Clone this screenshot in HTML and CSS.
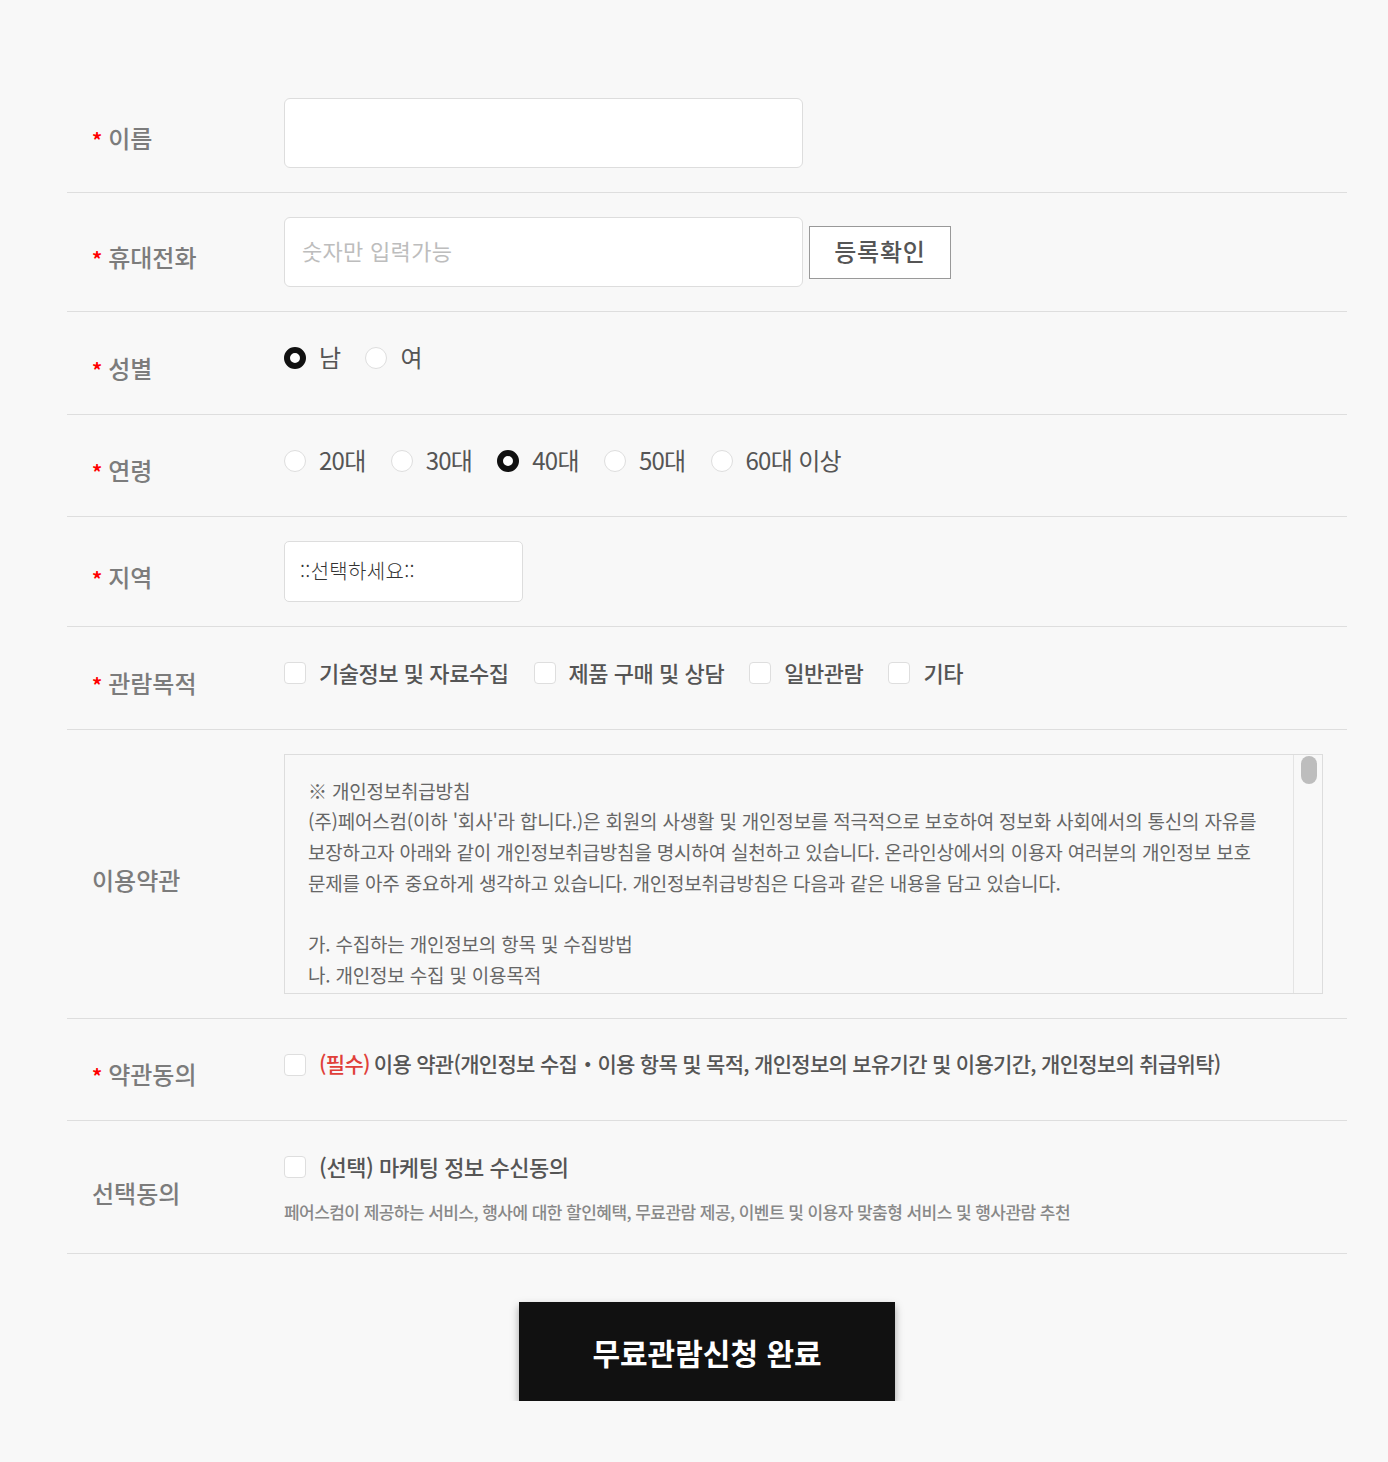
FILE: index.html
```html
<!DOCTYPE html>
<html lang="ko">
<head>
<meta charset="utf-8">
<title>무료관람신청</title>
<link rel="stylesheet" href="styles.css">
</head>
<body>
<form class="apply">
  <div class="row">
    <div class="label"><span class="req">*</span>이름</div>
    <div class="field"><input class="text" type="text"></div>
  </div>

  <div class="row">
    <div class="label"><span class="req">*</span>휴대전화</div>
    <div class="field field-inline">
      <input class="text" type="text" placeholder="숫자만 입력가능">
      <button type="button" class="check-btn">등록확인</button>
    </div>
  </div>

  <div class="row">
    <div class="label"><span class="req">*</span>성별</div>
    <div class="field">
      <div class="opts">
        <label class="opt"><input type="radio" name="gender" checked><span>남</span></label>
        <label class="opt"><input type="radio" name="gender"><span>여</span></label>
      </div>
    </div>
  </div>

  <div class="row">
    <div class="label"><span class="req">*</span>연령</div>
    <div class="field">
      <div class="opts">
        <label class="opt"><input type="radio" name="age"><span>20대</span></label>
        <label class="opt"><input type="radio" name="age"><span>30대</span></label>
        <label class="opt"><input type="radio" name="age" checked><span>40대</span></label>
        <label class="opt"><input type="radio" name="age"><span>50대</span></label>
        <label class="opt"><input type="radio" name="age"><span>60대 이상</span></label>
      </div>
    </div>
  </div>

  <div class="row">
    <div class="label"><span class="req">*</span>지역</div>
    <div class="field">
      <select class="select">
        <option>::선택하세요::</option>
        <option>서울</option>
        <option>경기</option>
        <option>인천</option>
        <option>부산</option>
      </select>
    </div>
  </div>

  <div class="row">
    <div class="label"><span class="req">*</span>관람목적</div>
    <div class="field">
      <div class="opts opts-bold">
        <label class="opt"><input type="checkbox"><span>기술정보 및 자료수집</span></label>
        <label class="opt"><input type="checkbox"><span>제품 구매 및 상담</span></label>
        <label class="opt"><input type="checkbox"><span>일반관람</span></label>
        <label class="opt"><input type="checkbox"><span>기타</span></label>
      </div>
    </div>
  </div>

  <div class="row">
    <div class="label">이용약관</div>
    <div class="field">
      <div class="terms">
        <div class="terms-body">
          <p>※ 개인정보취급방침</p>
          <p>(주)페어스컴(이하 '회사'라 합니다.)은 회원의 사생활 및 개인정보를 적극적으로 보호하여 정보화 사회에서의 통신의 자유를 보장하고자 아래와 같이 개인정보취급방침을 명시하여 실천하고 있습니다. 온라인상에서의 이용자 여러분의 개인정보 보호 문제를 아주 중요하게 생각하고 있습니다. 개인정보취급방침은 다음과 같은 내용을 담고 있습니다.</p>
          <p>&nbsp;</p>
          <p>가. 수집하는 개인정보의 항목 및 수집방법</p>
          <p>나. 개인정보 수집 및 이용목적</p>
          <p>다. 개인정보의 보유 및 이용기간</p>
          <p>라. 개인정보의 파기절차 및 방법</p>
          <p>마. 개인정보 제공</p>
          <p>바. 수집한 개인정보의 위탁</p>
          <p>사. 이용자 및 법정대리인의 권리와 그 행사방법</p>
        </div>
        <div class="scrollbar"><span class="thumb"></span></div>
      </div>
    </div>
  </div>

  <div class="row">
    <div class="label"><span class="req">*</span>약관동의</div>
    <div class="field">
      <div class="opts opts-agree">
        <label class="opt"><input type="checkbox"><span class="must">(필수)</span><span>이용 약관(개인정보 수집・이용 항목 및 목적, 개인정보의 보유기간 및 이용기간, 개인정보의 취급위탁)</span></label>
      </div>
    </div>
  </div>

  <div class="row">
    <div class="label">선택동의</div>
    <div class="field">
      <div class="opts opts-bold opts-tight">
        <label class="opt"><input type="checkbox"><span>(선택) 마케팅 정보 수신동의</span></label>
      </div>
      <p class="note">페어스컴이 제공하는 서비스, 행사에 대한 할인혜택, 무료관람 제공, 이벤트 및 이용자 맞춤형 서비스 및 행사관람 추천</p>
    </div>
  </div>

  <button type="submit" class="submit">무료관람신청 완료</button>
</form>
</body>
</html>
```

FILE: styles.css
```css
* { box-sizing: border-box; }

html, body {
  margin: 0;
  padding: 0;
  background: #f8f8f8;
}

body {
  font-family: "Noto Sans CJK KR", "Noto Sans", sans-serif;
  color: #555;
}

.apply {
  width: 1280px;
  margin: 0 0 0 67px;
  padding-top: 74px;
}

.row {
  display: flex;
  align-items: center;
  border-bottom: 1px solid #dedede;
}

.label {
  width: 217px;
  flex: none;
  padding-left: 25px;
  padding-top: 12px;
  font-size: 24px;
  font-weight: 500;
  color: #7c7c7c;
  letter-spacing: 0;
  line-height: 30px;
}

.req {
  color: #f00;
  font-weight: 700;
  font-size: 20px;
  margin-right: 6px;
}

.field {
  flex: 1;
  padding: 24px 0;
}

.field-inline {
  display: flex;
  align-items: center;
  gap: 6px;
}

.text {
  width: 519px;
  height: 70px;
  border: 1px solid #ddd;
  border-radius: 6px;
  background: #fff;
  padding: 0 17px 4px;
  font-family: inherit;
  font-size: 22px;
  letter-spacing: 0.3px;
  color: #333;
  outline: none;
}

.text::placeholder {
  color: #bdbdbd;
}

.check-btn {
  width: 142px;
  height: 53px;
  border: 1px solid #999;
  background: #fff;
  font-family: inherit;
  font-size: 24px;
  font-weight: 500;
  letter-spacing: 0.8px;
  color: #555;
  padding: 0 0 3px;
  cursor: pointer;
}

.opts {
  display: flex;
  align-items: center;
  height: 44px;
  margin-bottom: 9.5px;
}

.opt {
  display: flex;
  align-items: center;
  margin-right: 25px;
  font-size: 24px;
  color: #555;
  letter-spacing: -0.7px;
  cursor: pointer;
}

.opt span {
  padding-bottom: 3px;
}

.opt input {
  appearance: none;
  -webkit-appearance: none;
  margin: 0 13px 0 0;
  width: 22px;
  height: 22px;
  flex: none;
  background: #fff;
  border: 1px solid #dedede;
}

.opt input[type="radio"] {
  border-radius: 50%;
}

.opt input[type="radio"]:checked {
  border: 6px solid #111;
}

.opt input[type="checkbox"] {
  border-radius: 4px;
}

.opts-bold .opt {
  font-size: 22px;
  font-weight: 500;
  letter-spacing: -0.45px;
}

.opts-agree .opt {
  font-size: 21px;
  font-weight: 500;
  letter-spacing: -0.7px;
}

.opt .must {
  color: #e0403a;
  margin-right: 4px;
}

.select {
  appearance: none;
  -webkit-appearance: none;
  width: 239px;
  height: 61px;
  border: 1px solid #ddd;
  border-radius: 5px;
  background: #fff;
  padding: 0 15px 3px;
  font-family: inherit;
  font-size: 20px;
  font-weight: 300;
  letter-spacing: 0.3px;
  color: #333;
  outline: none;
}

.terms {
  display: flex;
  width: 1039px;
  height: 240px;
  border: 1px solid #ddd;
  background: #f8f8f8;
}

.terms-body {
  flex: 1;
  overflow: hidden;
  padding: 21px 6px 0 23px;
  font-size: 19px;
  line-height: 30.7px;
  letter-spacing: -0.2px;
  color: #666;
  word-break: keep-all;
}

.terms-body p {
  margin: 0;
}

.scrollbar {
  flex: none;
  width: 29px;
  border-left: 1px solid #e4e4e4;
  padding: 1px 5px 0 7px;
}

.thumb {
  display: block;
  height: 28px;
  border-radius: 8px;
  background: #bdbdbd;
}

.opts-tight {
  margin-bottom: 0;
}

.note {
  margin: 11px 0 5px;
  font-size: 17px;
  line-height: 24px;
  font-weight: 500;
  letter-spacing: -0.55px;
  color: #888;
}

.submit {
  display: block;
  margin: 48px auto 0;
  width: 376px;
  height: 99px;
  border: none;
  background: #111;
  color: #fff;
  font-family: inherit;
  font-size: 30px;
  font-weight: 700;
  letter-spacing: 0;
  box-shadow: 0 4px 8px rgba(0, 0, 0, 0.35);
  cursor: pointer;
}
```
